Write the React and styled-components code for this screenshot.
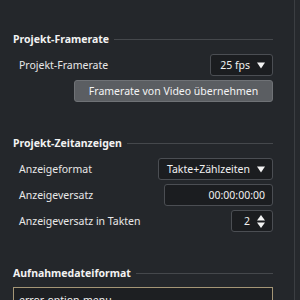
import React from 'react';
import styled, { createGlobalStyle } from 'styled-components';

const GlobalStyle = createGlobalStyle`
  html, body {
    margin: 0;
    padding: 0;
    background: #24272b;
    overflow: hidden;
  }
  body {
    font-family: "Noto Sans", "Liberation Sans", sans-serif;
    color: #e8e8e8;
  }
`;

const Frame = styled.div`
  display: flex;
  width: 300px;
  height: 300px;
  overflow: hidden;
`;

const Panel = styled.div`
  width: 295px;
  box-sizing: border-box;
  padding: 31px 21px 0 13px;
  border-right: 1px solid #3b3e42;
  display: flex;
  flex-direction: column;
`;

const Gutter = styled.div`
  flex: 1;
  background: #26292d;
`;

const Section = styled.section`
  display: flex;
  flex-direction: column;
  gap: 4px;
  margin-bottom: 33px;
`;

const Heading = styled.div`
  display: flex;
  align-items: center;
  gap: 5px;
  height: 16px;
  margin-bottom: 3px;
  font-weight: 700;
  font-size: 10.5px;
  color: #f2f2f2;
  white-space: nowrap;

  &::after {
    content: '';
    flex: 1;
    height: 1px;
    background: #45484c;
  }
`;

const Row = styled.div`
  display: flex;
  align-items: center;
  justify-content: space-between;
  padding-left: 6px;
  height: 22px;
  font-size: 10.5px;
  white-space: nowrap;
`;

const EndRow = styled.div`
  display: flex;
  justify-content: flex-end;
`;

const Control = styled.div`
  box-sizing: border-box;
  height: 22px;
  width: ${p => p.$w}px;
  display: flex;
  align-items: center;
  justify-content: flex-end;
  gap: 7px;
  padding: 0 7px;
  background: #1b1d20;
  border: 1px solid #4b4e53;
  border-radius: 3px;
  font-size: 10.5px;
  color: #f0f0f0;
  white-space: nowrap;
`;

const Button = styled.div`
  box-sizing: border-box;
  width: 199px;
  height: 22px;
  display: flex;
  align-items: center;
  justify-content: center;
  background: #5b5e62;
  border: 1px solid #6f7276;
  border-radius: 3px;
  font-size: 10.5px;
  color: #f4f4f4;
  white-space: nowrap;
`;

const Preview = styled.div`
  box-sizing: border-box;
  margin-top: -1px;
  height: 30px;
  border: 1px solid #a49676;
  background: #1d1f22;
  padding: 5px 5px;
  font-size: 10.5px;
  color: #f0f0f0;
`;

function DownArrow() {
  return (
    <svg width="8" height="7" viewBox="0 0 8 7">
      <path d="M0 0.5 H8 L4 6.5 Z" fill="#f2f2f2" />
    </svg>
  );
}

function SpinArrows() {
  return (
    <svg width="8" height="13" viewBox="0 0 8 13">
      <path d="M4 0 L8 5.5 H0 Z" fill="#f2f2f2" />
      <path d="M0 7.5 H8 L4 13 Z" fill="#f2f2f2" />
    </svg>
  );
}

export default function App() {
  return (
    <>
      <GlobalStyle />
      <Frame>
        <Panel>
          <Section>
            <Heading>Projekt-Framerate</Heading>
            <Row>
              <span>Projekt-Framerate</span>
              <Control $w={63}>25 fps <DownArrow /></Control>
            </Row>
            <EndRow>
              <Button>Framerate von Video übernehmen</Button>
            </EndRow>
          </Section>
          <Section>
            <Heading>Projekt-Zeitanzeigen</Heading>
            <Row>
              <span>Anzeigeformat</span>
              <Control $w={115}>Takte+Zählzeiten <DownArrow /></Control>
            </Row>
            <Row>
              <span>Anzeigeversatz</span>
              <Control $w={109}>00:00:00:00</Control>
            </Row>
            <Row>
              <span>Anzeigeversatz in Takten</span>
              <Control $w={42}>2 <SpinArrows /></Control>
            </Row>
          </Section>
          <Section>
            <Heading>Aufnahmedateiformat</Heading>
            <Preview>error-option-menu</Preview>
          </Section>
        </Panel>
        <Gutter />
      </Frame>
    </>
  );
}
